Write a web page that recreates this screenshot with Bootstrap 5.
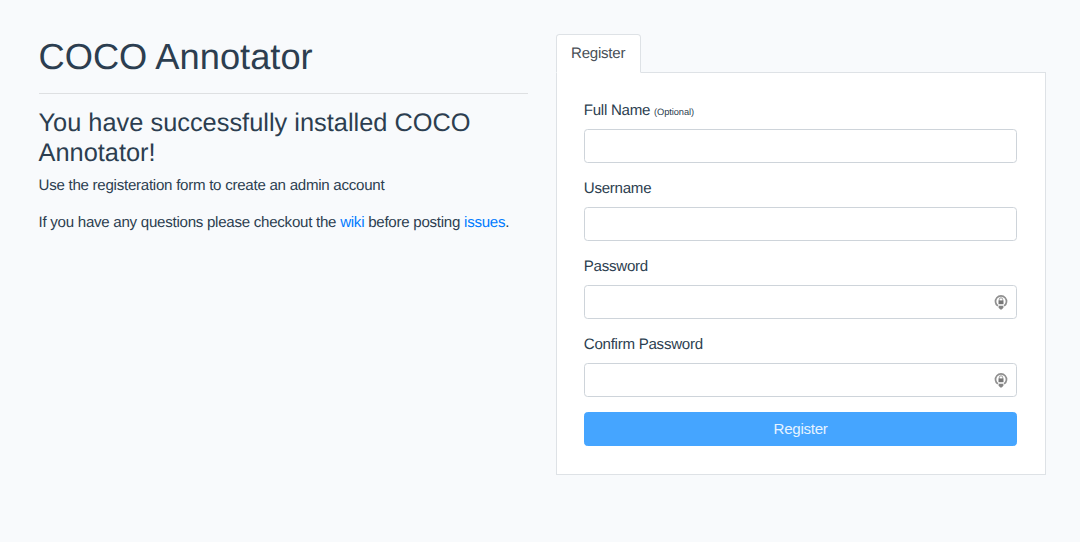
<!DOCTYPE html>
<html lang="en">
<head>
<meta charset="utf-8">
<title>COCO Annotator</title>
<meta name="viewport" content="width=device-width, initial-scale=1">
<link href="https://cdn.jsdelivr.net/npm/bootstrap@5.3.0/dist/css/bootstrap.min.css" rel="stylesheet">
<style>
  html { font-size: 14.51px; }
  body { background: #f8fafc; color: #2c3e50; font-family: "Liberation Sans", Arial, sans-serif; text-rendering: geometricPrecision; }
  .page { padding: 34.3px 34.5px 0 38.5px; }
  .page > .row { --bs-gutter-x: 27.2px; }
  h1 { font-size: 2.5rem; margin: 0; padding-top: .7px; color: #2c3e50; }
  h3 { font-size: 1.75rem; line-height: 30.2px; margin-bottom: 7px; }
  hr { margin: 14.2px 0 14.3px; color: #000; opacity: .1; }
  a { color: #007bff; text-decoration: none; }
  p, .form-label, .nav-link, .btn { font-size: 15.1px; letter-spacing: -.265px; line-height: 21.9px; }
  .nav-tabs { --bs-nav-tabs-border-color: #dee2e6; --bs-nav-tabs-border-radius: 3.6px; --bs-nav-link-font-size: 15.1px; }
  .nav-tabs .nav-link { padding: 7.4px 15.2px 7.1px 14.5px; }
  .nav-tabs .nav-link.active { color: #495057; background: #fff; border-bottom-color: #fff; }
  .panel { background: #fff; border: 1px solid #dee2e6; border-top: 0; padding: 27.2px 27.2px 27.2px; }
  .form-label { display: block; height: 22px; line-height: 22px; margin-bottom: 7px; }
  .optional { font-size: 9.3px; letter-spacing: -.1px; line-height: 1; }
  .form-control { height: 34.5px; border-color: #ced4da; border-radius: 3.6px; background: #fff; }
  .field-icon { position: absolute; right: 9px; top: 9px; width: 14px; height: 16px; }
  .btn-register { --bs-btn-color: #e6f3ff; --bs-btn-bg: #45a5ff; --bs-btn-border-color: #45a5ff; --bs-btn-border-radius: 3.6px; height: 34.5px; padding-top: 0; padding-bottom: 0; }
</style>
</head>
<body>
<svg width="0" height="0" class="position-absolute" aria-hidden="true">
  <symbol id="key-ring" viewBox="0 0 14 16">
    <path d="M3.9 11.9A5.5 5.5 0 1 1 10.1 11.9" fill="none" stroke="#909090" stroke-width="1.7"/>
    <path d="M5.3 6.8V5.5a1.7 1.7 0 0 1 3.4 0V6.8" fill="none" stroke="#9a9a9a" stroke-width="1"/>
    <path d="M4.5 6.4h5v3.8h-5z" fill="#777"/>
    <path d="M4.6 11.8h4.8v2L7.7 15.5H6.3L4.6 13.8z" fill="#858585"/>
  </symbol>
</svg>
<main class="container-fluid page">
  <div class="row">
    <div class="col-6">
      <h1>COCO Annotator</h1>
      <hr>
      <h3>You have successfully installed COCO Annotator!</h3>
      <p class="mb-3">Use the registeration form to create an admin account</p>
      <p>If you have any questions please checkout the <a href="#">wiki</a> before posting <a href="#">issues</a>.</p>
    </div>
    <div class="col-6">
      <ul class="nav nav-tabs">
        <li class="nav-item"><a class="nav-link active" href="#">Register</a></li>
      </ul>
      <form class="panel">
        <div class="mb-3">
          <label class="form-label" for="name">Full Name <span class="optional">(Optional)</span></label>
          <input class="form-control" id="name" type="text">
        </div>
        <div class="mb-3">
          <label class="form-label" for="user">Username</label>
          <input class="form-control" id="user" type="text">
        </div>
        <div class="mb-3">
          <label class="form-label" for="pass">Password</label>
          <div class="position-relative">
            <input class="form-control" id="pass" type="password">
            <svg class="field-icon"><use href="#key-ring"/></svg>
          </div>
        </div>
        <div class="mb-3">
          <label class="form-label" for="confirm">Confirm Password</label>
          <div class="position-relative">
            <input class="form-control" id="confirm" type="password">
            <svg class="field-icon"><use href="#key-ring"/></svg>
          </div>
        </div>
        <button class="btn btn-register w-100 d-block" type="button">Register</button>
      </form>
    </div>
  </div>
</main>
<script src="https://cdn.jsdelivr.net/npm/bootstrap@5.3.0/dist/js/bootstrap.bundle.min.js"></script>
</body>
</html>
